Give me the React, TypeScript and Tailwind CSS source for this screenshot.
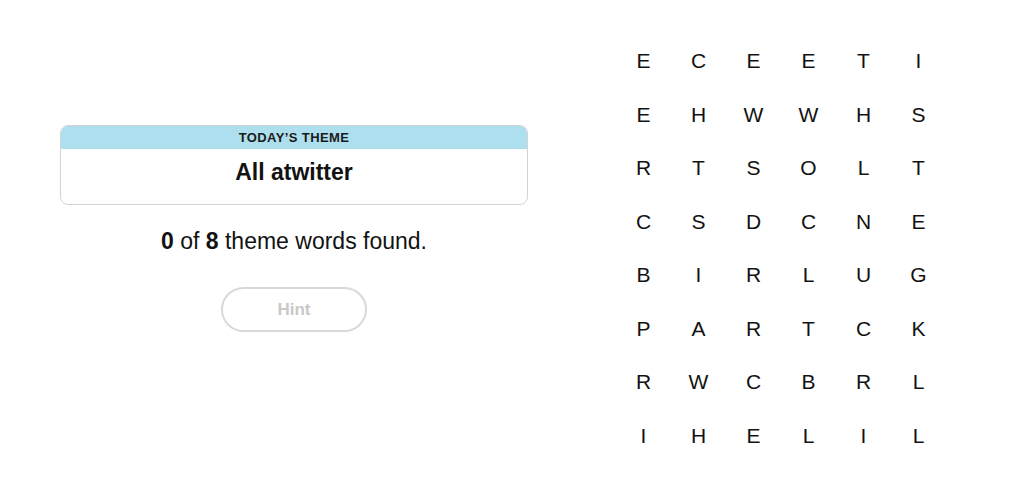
import React from "react";

const rows = [
  "ECEETI",
  "EHWWHS",
  "RTSOLT",
  "CSDCNE",
  "BIRLUG",
  "PARTCK",
  "RWCBRL",
  "IHELIL",
];

export default function App() {
  return (
    <div
      className="w-[1024px] h-[495px] bg-white flex items-start text-[#121212]"
      style={{ fontFamily: '"Liberation Sans", Arial, sans-serif' }}
    >
      <div className="w-[468px] ml-[60px] pt-[125px] flex flex-col items-center">
        <div className="w-full rounded-lg border border-[#d4d4d4] overflow-hidden">
          <div className="h-[23px] bg-[#aedfee] flex items-center justify-center text-[13px] font-bold tracking-[0.03em] text-[#1a1a1a]">
            TODAY’S THEME
          </div>
          <div className="h-[55px] flex items-center justify-center pb-[8px] text-[23px] font-bold">
            All atwitter
          </div>
        </div>
        <div className="mt-[22px] text-[23px] leading-[28px]">
          <span className="font-bold">0</span> of <span className="font-bold">8</span> theme words found.
        </div>
        <button className="mt-[32px] w-[146px] h-[45px] rounded-full border-2 border-[#d9d9d9] text-[#c8c8c8] font-bold text-[17px] flex items-center justify-center bg-white">
          Hint
        </button>
      </div>
      <div className="ml-[88px] mt-[34px] grid grid-cols-6 content-start">
        {rows.map((r, i) =>
          r.split("").map((ch, j) => (
            <div
              key={`${i}-${j}`}
              className="w-[55px] h-[53.5px] flex items-center justify-center text-[21px] text-[#121212]"
            >
              {ch}
            </div>
          ))
        )}
      </div>
    </div>
  );
}
